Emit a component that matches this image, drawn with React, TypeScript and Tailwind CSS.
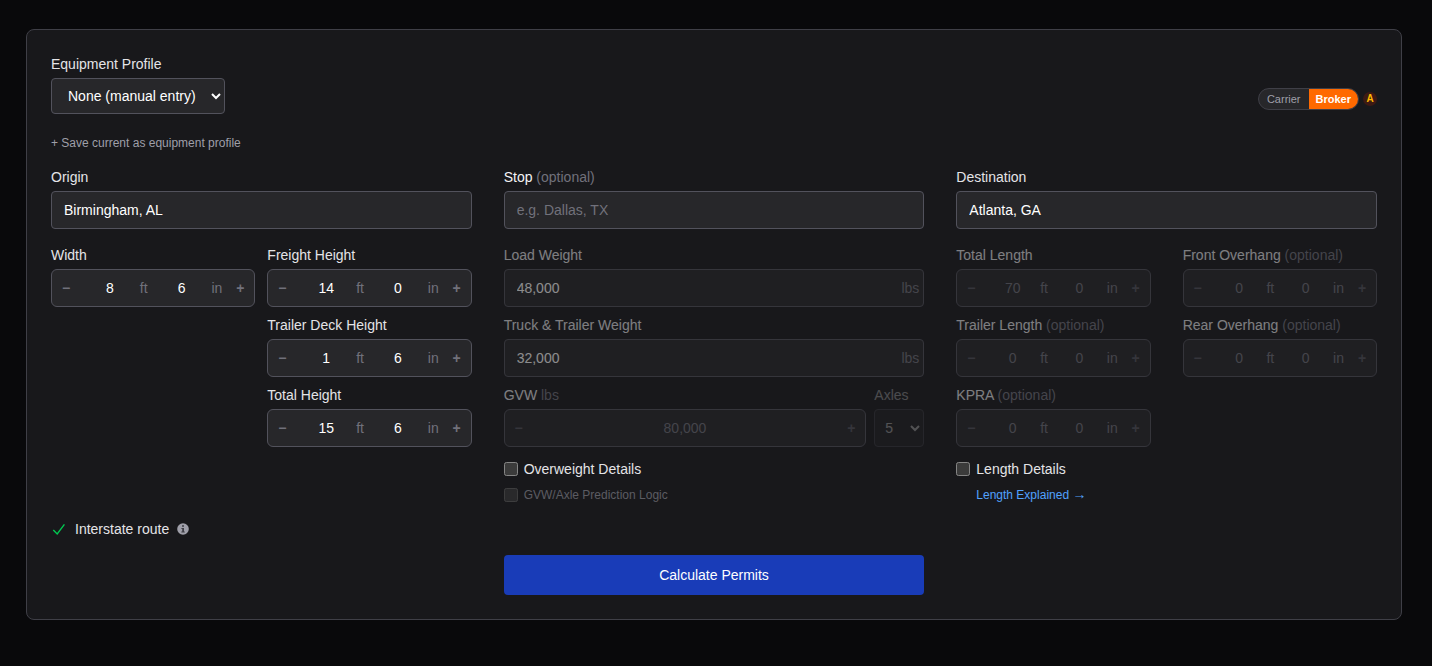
import React, { useId, useState } from 'react';

type Children = { children: React.ReactNode };

function Optional({ children }: Children) {
  return <span className="text-zinc-500">{children}</span>;
}

const labelClass = 'block text-sm text-zinc-200';
const strongLabelClass = 'block text-sm text-zinc-100';

function TextField({ label, note, value, placeholder, strong }: { label: string; note?: string; value?: string; placeholder?: string; strong?: boolean }) {
  const id = useId();
  return (
    <div className="flex flex-col gap-1">
      <label htmlFor={id} className={strong ? strongLabelClass : labelClass}>
        {label} {note && <Optional>{note}</Optional>}
      </label>
      <input
        id={id}
        type="text"
        defaultValue={value}
        placeholder={placeholder}
        className="h-[38px] w-full rounded border border-zinc-600 bg-zinc-800 px-3 text-sm text-white outline-none placeholder:text-zinc-500 focus:border-blue-500"
      />
    </div>
  );
}

function StepButton({ sign, label, muted, onClick }: { sign: string; label: string; muted?: boolean; onClick?: () => void }) {
  return (
    <button
      type="button"
      aria-label={label}
      onClick={onClick}
      className={`w-7 shrink-0 text-sm font-bold ${muted ? 'text-zinc-600' : 'text-zinc-500'}`}
    >
      {sign}
    </button>
  );
}

const numberClass = 'w-0 min-w-0 flex-1 bg-transparent text-center text-sm outline-none';

function FeetInches({ label, note, feet, inches, muted }: { label: string; note?: string; feet: number; inches: number; muted?: boolean }) {
  const id = useId();
  const [total, setTotal] = useState(feet * 12 + inches);
  const tone = muted ? 'text-zinc-500' : 'text-white';
  const step = (by: number) => setTotal((t) => Math.max(0, t + by));
  return (
    <div className="flex flex-col gap-1">
      <label htmlFor={id} className={labelClass}>
        {label} {note && <Optional>{note}</Optional>}
      </label>
      <div className="flex h-[38px] items-stretch rounded-md border border-zinc-600 bg-zinc-800">
        <StepButton sign="−" label={`Decrease ${label}`} muted={muted} onClick={() => step(-1)} />
        <input
          id={id}
          type="text"
          inputMode="numeric"
          value={Math.floor(total / 12)}
          onChange={(e) => setTotal((Number(e.target.value) || 0) * 12 + (total % 12))}
          className={`${numberClass} ${tone}`}
        />
        <span className="self-center pr-1 text-sm text-zinc-500">ft</span>
        <input
          type="text"
          inputMode="numeric"
          aria-label={`${label} inches`}
          value={total % 12}
          onChange={(e) => setTotal(Math.floor(total / 12) * 12 + (Number(e.target.value) || 0))}
          className={`${numberClass} ${tone}`}
        />
        <span className="self-center pr-1 text-sm text-zinc-500">in</span>
        <StepButton sign="+" label={`Increase ${label}`} muted={muted} onClick={() => step(1)} />
      </div>
    </div>
  );
}

function WeightField({ label, value }: { label: string; value: string }) {
  const id = useId();
  return (
    <div className="flex flex-col gap-1">
      <label htmlFor={id} className={labelClass}>
        {label}
      </label>
      <div className="flex h-[38px] items-center rounded border border-zinc-600 bg-zinc-800 pr-1">
        <input id={id} type="text" defaultValue={value} className="h-full min-w-0 flex-1 bg-transparent px-3 text-sm text-white outline-none" />
        <span className="text-sm text-zinc-500">lbs</span>
      </div>
    </div>
  );
}

function Header() {
  const [role, setRole] = useState('Broker');
  return (
    <div className="flex items-end justify-between">
      <div className="flex flex-col items-start gap-1">
        <label htmlFor="profile" className={labelClass}>
          Equipment Profile
        </label>
        <select id="profile" className="h-9 rounded border border-zinc-600 bg-zinc-800 px-3 text-sm text-white">
          <option>None (manual entry)</option>
        </select>
      </div>
      <div className="flex items-center gap-1 pb-1">
        <div className="flex overflow-hidden rounded-full border border-zinc-700 bg-zinc-800 text-[11px] leading-4">
          {['Carrier', 'Broker'].map((name) => (
            <button
              key={name}
              type="button"
              aria-pressed={role === name}
              onClick={() => setRole(name)}
              className={`py-0.5 ${role === name ? 'bg-[#ff6900] px-[7px] font-bold text-white' : 'px-2 text-zinc-400'}`}
            >
              {name}
            </button>
          ))}
        </div>
        <span className="flex size-3.5 items-center justify-center rounded-full bg-[#3d1a14] text-[10px] leading-none font-bold text-[#ffb900]">A</span>
      </div>
    </div>
  );
}

export default function App() {
  return (
    <div className="min-h-screen bg-[#09090b] pt-[29px] pr-[30px] pb-11 pl-[26px] font-['Liberation_Sans',Arial,sans-serif] scheme-dark">
      <form className="rounded-lg border border-zinc-700 bg-[#18181b] p-6" onSubmit={(e) => e.preventDefault()}>
        <Header />
        <button type="button" className="mt-[21px] block text-xs text-zinc-400">
          + Save current as equipment profile
        </button>

        <div className="mt-4 grid grid-cols-3 gap-x-8 gap-y-4">
          <TextField label="Origin" value="Birmingham, AL" />
          <TextField label="Stop" note="(optional)" placeholder="e.g. Dallas, TX" strong />
          <TextField label="Destination" value="Atlanta, GA" />

          <div className="grid grid-cols-2 content-start gap-x-3">
            <FeetInches label="Width" feet={8} inches={6} />
            <div className="flex flex-col gap-2">
              <FeetInches label="Freight Height" feet={14} inches={0} />
              <FeetInches label="Trailer Deck Height" feet={1} inches={6} />
              <FeetInches label="Total Height" feet={15} inches={6} />
            </div>
          </div>

          <div>
            <div className="flex flex-col gap-2 opacity-50">
              <WeightField label="Load Weight" value="48,000" />
              <WeightField label="Truck & Trailer Weight" value="32,000" />
              <div className="flex gap-2">
                <div className="flex flex-1 flex-col gap-1">
                  <label htmlFor="gvw" className={labelClass}>
                    GVW <Optional>lbs</Optional>
                  </label>
                  <div className="flex h-[38px] items-stretch rounded-md border border-zinc-600 bg-zinc-800">
                    <StepButton sign="−" label="Decrease GVW" muted />
                    <input id="gvw" type="text" defaultValue="80,000" className={`${numberClass} text-zinc-500`} />
                    <StepButton sign="+" label="Increase GVW" muted />
                  </div>
                </div>
                <div className="flex w-[50px] flex-col gap-1 opacity-50">
                  <label htmlFor="axles" className={labelClass}>
                    Axles
                  </label>
                  <select id="axles" defaultValue="5" className="h-[38px] w-full rounded border border-zinc-600 bg-zinc-800 px-1.5 text-sm text-white">
                    <option>5</option>
                    <option>6</option>
                    <option>7</option>
                  </select>
                </div>
              </div>
            </div>
            <label className="mt-3 flex items-center gap-1.5 text-sm text-zinc-200">
              <input type="checkbox" className="size-3.5" />
              Overweight Details
            </label>
            <label className="mt-2 flex items-center gap-1.5 text-xs text-zinc-400 opacity-50">
              <input type="checkbox" disabled className="size-3.5" />
              GVW/Axle Prediction Logic
            </label>
          </div>

          <div>
            <div className="grid grid-cols-2 gap-x-8 gap-y-2 opacity-50">
              <FeetInches label="Total Length" feet={70} inches={0} muted />
              <FeetInches label="Front Overhang" note="(optional)" feet={0} inches={0} muted />
              <FeetInches label="Trailer Length" note="(optional)" feet={0} inches={0} muted />
              <FeetInches label="Rear Overhang" note="(optional)" feet={0} inches={0} muted />
              <FeetInches label="KPRA" note="(optional)" feet={0} inches={0} muted />
            </div>
            <label className="mt-3 flex items-center gap-1.5 text-sm text-zinc-200">
              <input type="checkbox" className="size-3.5" />
              Length Details
            </label>
            <a href="#length-explained" className="mt-2 block pl-5 text-xs text-blue-400">
              Length Explained <span className="text-sm leading-none">→</span>
            </a>
          </div>
        </div>

        <div className="mt-4 flex items-center gap-2 text-sm text-zinc-200">
          <svg viewBox="0 0 16 16" className="size-4" fill="none" stroke="#00c951" strokeWidth="1.4" aria-hidden="true">
            <path d="M2.3 8.9 6.2 12.9 13.4 3.4" />
          </svg>
          Interstate route
          <svg viewBox="0 0 12 12" className="size-3" role="img" aria-label="Route information">
            <circle cx="6" cy="6" r="5.8" fill="#9f9fa9" />
            <path d="M5 2.2h2v1.6H5zM4.4 4.9H7v3.6h.8v1H4.3v-1h.9V5.9h-.8z" fill="#3f3f46" />
          </svg>
        </div>

        <div className="mt-4 grid grid-cols-3 gap-x-8">
          <button type="submit" className="col-start-2 h-10 rounded bg-blue-800 text-sm text-white">
            Calculate Permits
          </button>
        </div>
      </form>
    </div>
  );
}
